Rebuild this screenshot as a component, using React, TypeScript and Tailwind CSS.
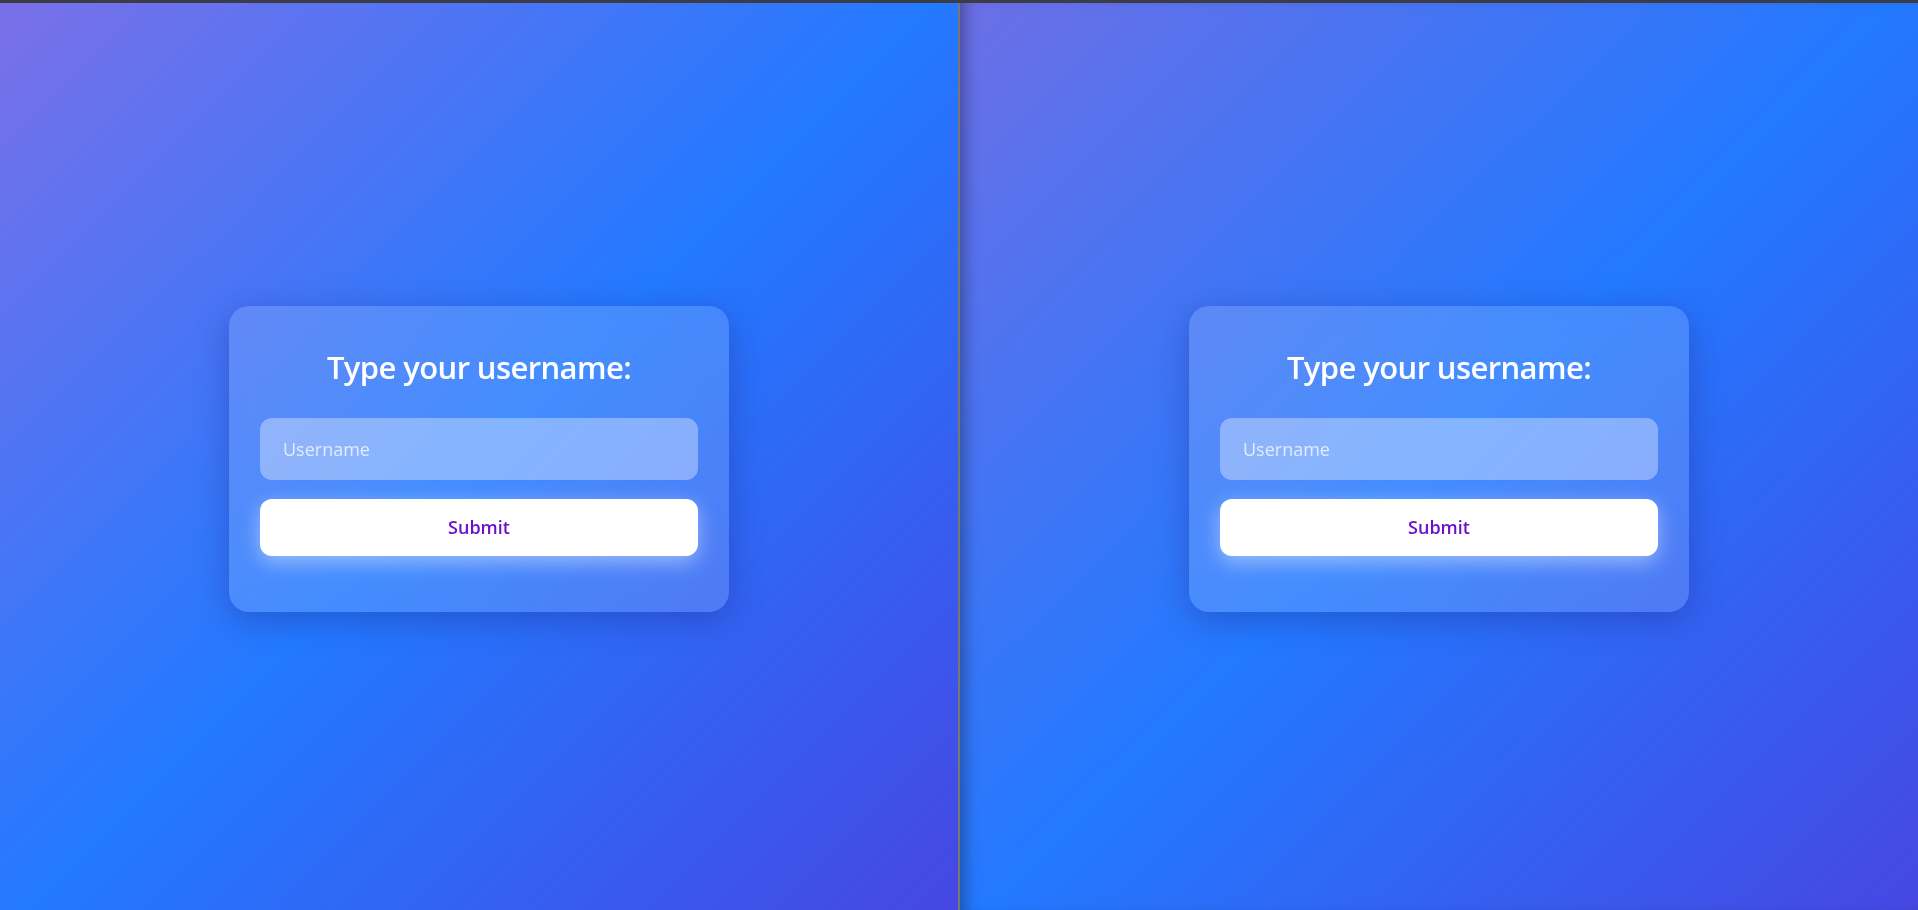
import React from "react";

const font = { fontFamily: '"Open Sans", "Noto Sans", Arial, sans-serif' };

const LoginCard: React.FC = () => {
  return (
    <div className="w-[500px] h-[306px] rounded-[20px] bg-white/15 backdrop-blur-md shadow-[0_8px_32px_rgba(31,38,135,0.37)] px-[31px] pt-[40px] flex flex-col">
      <h2 className="text-[31px] font-semibold text-white text-center leading-[42px] tracking-[-0.6px]">Type your username:</h2>
      <input
        type="text"
        placeholder="Username"
        className="mt-[30px] h-[62px] w-full rounded-[12px] bg-white/35 px-[23px] text-[18px] text-white placeholder:text-white/75 outline-none"
        style={font}
      />
      <button className="mt-[19px] h-[57px] w-full rounded-[12px] bg-white text-[18px] font-semibold text-[#6a11cb] shadow-[0_6px_20px_rgba(255,255,255,0.45)]">
        Submit
      </button>
    </div>
  );
};

const Pane: React.FC<{ inset?: boolean }> = ({ inset }) => (
  <div
    className={
      "flex-1 h-full flex items-center justify-center pt-[5px] " +
      (inset
        ? "bg-[linear-gradient(135deg,#6c6fe6_0%,#2379ff_50%,#4647e2_100%)] shadow-[inset_14px_0_16px_-10px_rgba(0,0,0,0.35)]"
        : "bg-[linear-gradient(135deg,#7a70e8_0%,#2379ff_50%,#4647e2_100%)]")
    }
  >
    <LoginCard />
  </div>
);

export default function App() {
  return (
    <div className="w-[1918px] h-[910px] flex flex-col bg-[#3c3c46] overflow-hidden" style={font}>
      <div className="h-[3px] bg-[#3c3c46]" />
      <div className="flex-1 flex">
        <Pane />
        <div className="w-[2px] bg-[#77777a]" />
        <Pane inset />
      </div>
    </div>
  );
}
